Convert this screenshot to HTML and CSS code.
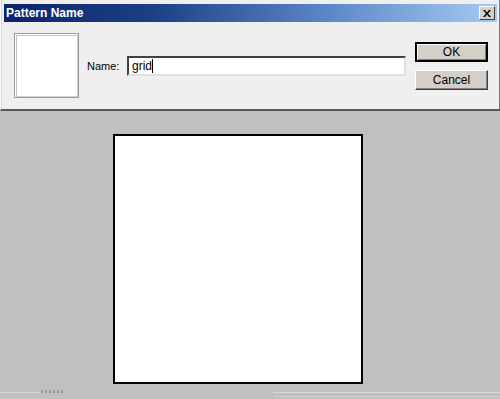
FILE: index.html
```html
<!DOCTYPE html>
<html>
<head>
<meta charset="utf-8">
<link rel="stylesheet" href="styles.css">
</head>
<body>
<div class="window">
  <div class="titlebar">
    <span class="title">Pattern Name</span>
    <span class="close"><svg width="8" height="7" viewBox="0 0 8 7"><path d="M0 0h2l2 2.5 2-2.5h2l-3 3.5 3 3.5h-2l-2-2.5-2 2.5h-2l3-3.5z" fill="#000"/></svg></span>
  </div>
  <div class="body">
    <div class="thumb"></div>
    <label class="label">Name:</label>
    <div class="input"><span class="value">grid</span><span class="caret"></span></div>
    <div class="buttons">
      <div class="btn default"><span>OK</span></div>
      <div class="btn"><span>Cancel</span></div>
    </div>
  </div>
</div>
<div class="workspace">
  <div class="canvas"></div>
  <div class="status">
    <div class="status-left"><span class="mark"></span></div>
    <div class="status-right"></div>
  </div>
</div>
</body>
</html>
```
FILE: styles.css
```css
html, body {
  margin: 0;
  padding: 0;
  background: #c0c0c0;
  width: 500px;
  height: 399px;
  overflow: hidden;
  font-family: "Liberation Sans", Arial, sans-serif;
}
.window {
  background: #efefef;
  padding: 4px 3px 0 3px;
  border-left: 1px solid #f8f8f8;
  border-bottom: 2px solid #5a5a5a;
  box-shadow: inset 1px 0 0 #d8d8d8, inset -1px 0 0 #7a7a7a;
  height: 105px;
  width: 493px;
}
.titlebar {
  height: 18px;
  background: linear-gradient(to right, #0a246a 0%, #1c3f86 30%, #5a86c8 65%, #a6caf0 100%);
  display: flex;
  align-items: center;
  justify-content: space-between;
  padding: 0 2px;
}
.title {
  color: #fff;
  font-weight: bold;
  font-size: 12px;
}
.close {
  width: 14px;
  height: 12px;
  background: #d4d0c8;
  border-top: 1px solid #fff;
  border-left: 1px solid #fff;
  border-right: 1px solid #404040;
  border-bottom: 1px solid #404040;
  display: flex;
  align-items: center;
  justify-content: center;
}
.body {
  display: flex;
  align-items: flex-start;
  padding: 11px 0 0 10px;
}
.thumb {
  width: 63px;
  height: 63px;
  border: 1px solid #9a9a9a;
  background: #fff;
  box-shadow: inset 1px 1px 0 #fff, inset 2px 2px 0 #c4c4c4, inset -1px -1px 0 #d0d0d0;
}
.label {
  font-size: 11px;
  color: #000;
  width: 40px;
  margin-left: 8px;
  margin-top: 27px;
}
.input {
  width: 272px;
  height: 16px;
  margin-top: 23px;
  background: #fff;
  border-top: 2px solid #404040;
  border-left: 2px solid #404040;
  border-right: 2px solid #e0e0e0;
  border-bottom: 2px solid #e0e0e0;
  display: flex;
  align-items: center;
  padding-left: 3px;
  font-size: 12px;
}
.caret {
  width: 1px;
  height: 14px;
  background: #000;
}
.buttons {
  display: flex;
  flex-direction: column;
  gap: 8px;
  margin-left: 9px;
  margin-top: 9px;
}
.btn {
  width: 71px;
  height: 18px;
  background: #d4d0c8;
  border-top: 1px solid #fff;
  border-left: 1px solid #fff;
  border-right: 1px solid #404040;
  border-bottom: 1px solid #404040;
  box-shadow: inset -1px -1px 0 #808080;
  display: flex;
  align-items: center;
  justify-content: center;
  font-size: 12px;
  color: #000;
}
.btn.default {
  width: 69px;
  height: 16px;
  border: 2px solid #000;
  box-shadow: inset 1px 1px 0 #fff, inset -1px -1px 0 #808080;
}
.workspace {
  padding-top: 23px;
}
.canvas {
  width: 246px;
  height: 246px;
  margin-left: 113px;
  background: #fff;
  border: 2px solid #000;
}
.status {
  display: flex;
  justify-content: space-between;
  margin-top: 8px;
  height: 6px;
}
.status-left {
  width: 63px;
  border-top: 1px solid #d8d8d8;
  display: flex;
  justify-content: flex-end;
}
.mark {
  width: 22px;
  height: 3px;
  margin-top: -3px;
  background: repeating-linear-gradient(to right, #9a9a9a 0 2px, #c0c0c0 2px 4px);
}
.status-right {
  width: 227px;
  border-top: 1px solid #d8d8d8;
  border-bottom: 1px solid #d0d0d0;
  height: 3px;
}
```
